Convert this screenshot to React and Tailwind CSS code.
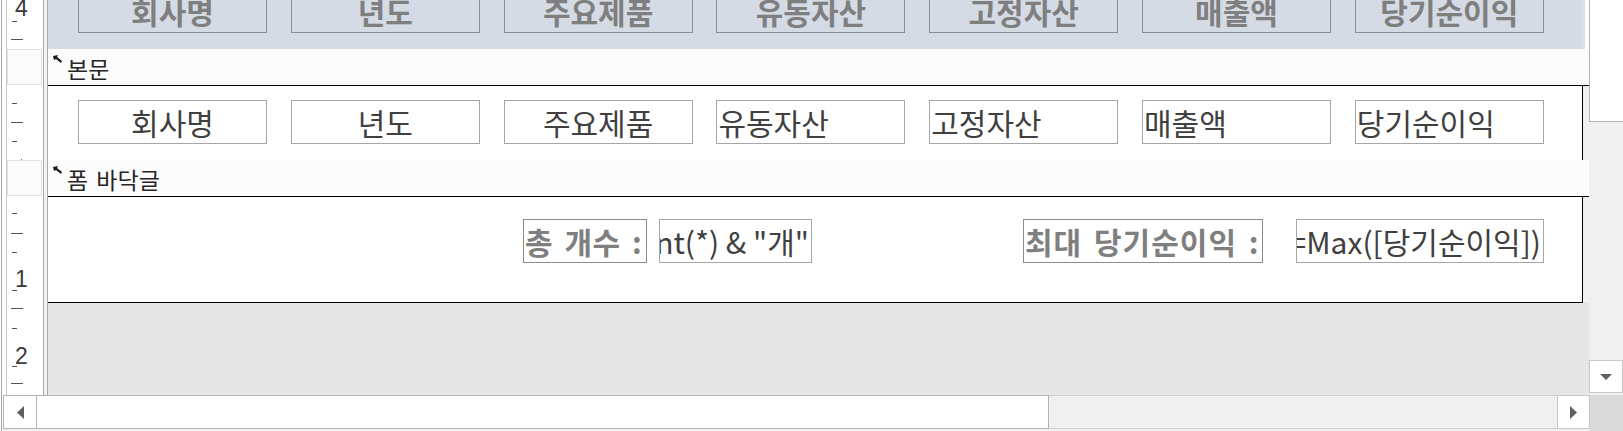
import React from 'react';

const fields = ['회사명', '년도', '주요제품', '유동자산', '고정자산', '매출액', '당기순이익'];
// detail text boxes: first three centered, rest left aligned
const centered = [true, true, true, false, false, false, false];

function SectionMarker() {
  return (
    <svg width="9" height="8" viewBox="0 0 9 8" className="shrink-0">
      <polygon points="0,1 5,0 4,2 9,6 8,8 3,4 1,5" fill="#1a1a1a" />
    </svg>
  );
}

function SectionBar({ label }) {
  return (
    <div className="h-[37px] bg-[#fcfcfc] border-b border-black flex items-center pl-[5px]">
      <div className="self-start mt-[6px]">
        <SectionMarker />
      </div>
      <span className="ml-[5px] mt-[2px] text-[23px] leading-none text-[#262626] [word-spacing:3px]">{label}</span>
    </div>
  );
}

function Tick({ y, long }) {
  return (
    <div
      className={long ? 'absolute left-[4px] w-[12px] h-[1px] bg-[#555]' : 'absolute left-[5px] w-[5px] h-[1px] bg-[#555]'}
      style={{ top: y }}
    />
  );
}

function RulerNum({ y, n }) {
  return (
    <span
      className="absolute left-[8px] text-[23px] leading-none text-[#3a3a3a] font-['Liberation_Sans',sans-serif] font-light"
      style={{ top: y }}
    >
      {n}
    </span>
  );
}

function Ruler() {
  return (
    <div className="w-[46px] h-full flex bg-white shrink-0">
      <div className="w-[4px]" />
      <div className="w-[1px] bg-[#c8c8c8]" />
      <div className="w-[36px] relative">
        <RulerNum y={-3} n="4" />
        <Tick y={21} />
        <Tick y={39} long />
        <div className="absolute left-0 w-[35px] top-[49px] h-[36px] bg-[#fbfbfb] border border-[#e2e2e2]" />
        <Tick y={103} />
        <Tick y={122} long />
        <Tick y={141} />
        <div className="absolute left-[14px] top-[159px] w-[1px] h-[1px] bg-[#777]" />
        <div className="absolute left-0 w-[35px] top-[160px] h-[36px] bg-[#fbfbfb] border border-[#e2e2e2]" />
        <Tick y={213} />
        <Tick y={233} long />
        <Tick y={252} />
        <RulerNum y={268} n="1" />
        <Tick y={290} />
        <Tick y={308} long />
        <Tick y={328} />
        <RulerNum y={345} n="2" />
        <Tick y={366} />
        <Tick y={383} long />
      </div>
      <div className="w-[1px] bg-[#a8a8a8]" />
      <div className="w-[3px] bg-[#f3f3f3]" />
      <div className="w-[1px] bg-[#a8a8a8]" />
    </div>
  );
}

function Arrow({ dir }) {
  const pts = {
    down: '0,0 12,0 6,6',
    left: '7,0 7,13 0,6.5',
    right: '0,0 7,6.5 0,13',
  }[dir];
  const size = dir === 'down' ? [12, 6] : [7, 13];
  return (
    <svg width={size[0]} height={size[1]} viewBox={`0 0 ${size[0]} ${size[1]}`}>
      <polygon points={pts} fill="#5f5f5f" />
    </svg>
  );
}

export default function App() {
  return (
    <div className="w-[1623px] h-[431px] overflow-hidden flex bg-white font-['Noto_Sans_CJK_KR',sans-serif]">
      <div className="w-[1px] bg-white" />
      <div className="w-[1px] bg-[#a8a8a8]" />
      <div className="w-[1621px] flex flex-col">
        <div className="h-[395px] flex">
          <Ruler />

          {/* form design canvas */}
          <div className="w-[1541px] flex flex-col bg-[#e6e6e6] shrink-0">
            {/* form header (scrolled) */}
            <div className="h-[49px] flex">
              <div className="w-[1534px] bg-[#d5dbe5] overflow-hidden flex items-end pb-[16px] pl-[30px] gap-[23.8px]">
                {fields.map((f) => (
                  <div
                    key={f}
                    className="w-[189px] h-[44px] shrink-0 border border-[#8c8c8c] flex items-center justify-center text-[30px] font-bold leading-none text-[#7f7f7f]"
                  >
                    {f}
                  </div>
                ))}
              </div>
              <div className="w-[3px] bg-[#dedede]" />
              <div className="flex-1 bg-white" />
            </div>

            <SectionBar label="본문" />

            {/* detail */}
            <div className="h-[74px] flex">
              <div className="w-[1535px] bg-white border-r border-black flex pt-[14px] pl-[30px] gap-[23.8px]">
                {fields.map((f, i) => (
                  <div
                    key={f}
                    className={
                      centered[i]
                        ? 'w-[189px] h-[44px] shrink-0 border border-[#a6a6a6] flex items-center justify-center text-[30px] leading-none text-[#404040]'
                        : 'w-[189px] h-[44px] shrink-0 border border-[#a6a6a6] flex items-center pl-[1px] text-[30px] leading-none text-[#404040]'
                    }
                  >
                    {f}
                  </div>
                ))}
              </div>
              <div className="flex-1 bg-[#f0f0f0]" />
            </div>

            <SectionBar label="폼 바닥글" />

            {/* footer */}
            <div className="h-[106px] flex">
              <div className="w-[1535px] bg-white border-r border-b border-black flex items-start pt-[22px] pl-[475px]">
                <div className="w-[124px] h-[44px] shrink-0 border border-[#8c8c8c] flex items-center pl-[1px] text-[30px] font-bold leading-none text-[#7f7f7f] whitespace-nowrap overflow-hidden tracking-[0.5px] [word-spacing:4px]">
                  총 개수 :
                </div>
                <div className="ml-[12px] w-[153px] h-[44px] shrink-0 border border-[#a6a6a6] flex items-center justify-end pr-[2px] text-[30px] leading-none text-[#404040] whitespace-nowrap overflow-hidden">
                  <span className="shrink-0">=Count(*) &amp; "개"</span>
                </div>
                <div className="ml-[211px] w-[240px] h-[44px] shrink-0 border border-[#8c8c8c] flex items-center pl-[1px] text-[30px] font-bold leading-none text-[#7f7f7f] whitespace-nowrap overflow-hidden tracking-[1px] [word-spacing:4px]">
                  최대 당기순이익 :
                </div>
                <div className="ml-[33px] w-[248px] h-[44px] shrink-0 border border-[#a6a6a6] flex items-center justify-end pr-[2px] text-[30px] leading-none text-[#404040] whitespace-nowrap overflow-hidden">
                  <span className="shrink-0">=Max([당기순이익])</span>
                </div>
              </div>
              <div className="flex-1 bg-[#f0f0f0]" />
            </div>

            <div className="flex-1 bg-[#e6e6e6]" />
          </div>

          {/* vertical scrollbar */}
          <div className="w-[34px] flex flex-col bg-[#f0f0f0]">
            <div className="h-[122px] bg-white border-l border-b border-[#b4b4b4]" />
            <div className="flex-1" />
            <div className="h-[33px] mb-[2px] bg-white border border-[#c8c8c8] flex items-center justify-center">
              <Arrow dir="down" />
            </div>
          </div>
        </div>

        {/* horizontal scrollbar */}
        <div className="h-[36px] flex bg-[#f0f0f0]">
          <div className="w-[1px] bg-white" />
          <div className="w-[34px] h-[34px] bg-white border border-[#b4b4b4] flex items-center justify-center">
            <Arrow dir="left" />
          </div>
          <div className="w-[1012px] h-[34px] bg-white border border-l-0 border-[#b4b4b4]" />
          <div className="flex-1 h-[34px] border-y border-[#d0d0d0]" />
          <div className="w-[33px] h-[34px] bg-white border border-[#c8c8c8] flex items-center justify-center">
            <Arrow dir="right" />
          </div>
          <div className="w-[33px] bg-[#dadada]" />
        </div>
      </div>
    </div>
  );
}
